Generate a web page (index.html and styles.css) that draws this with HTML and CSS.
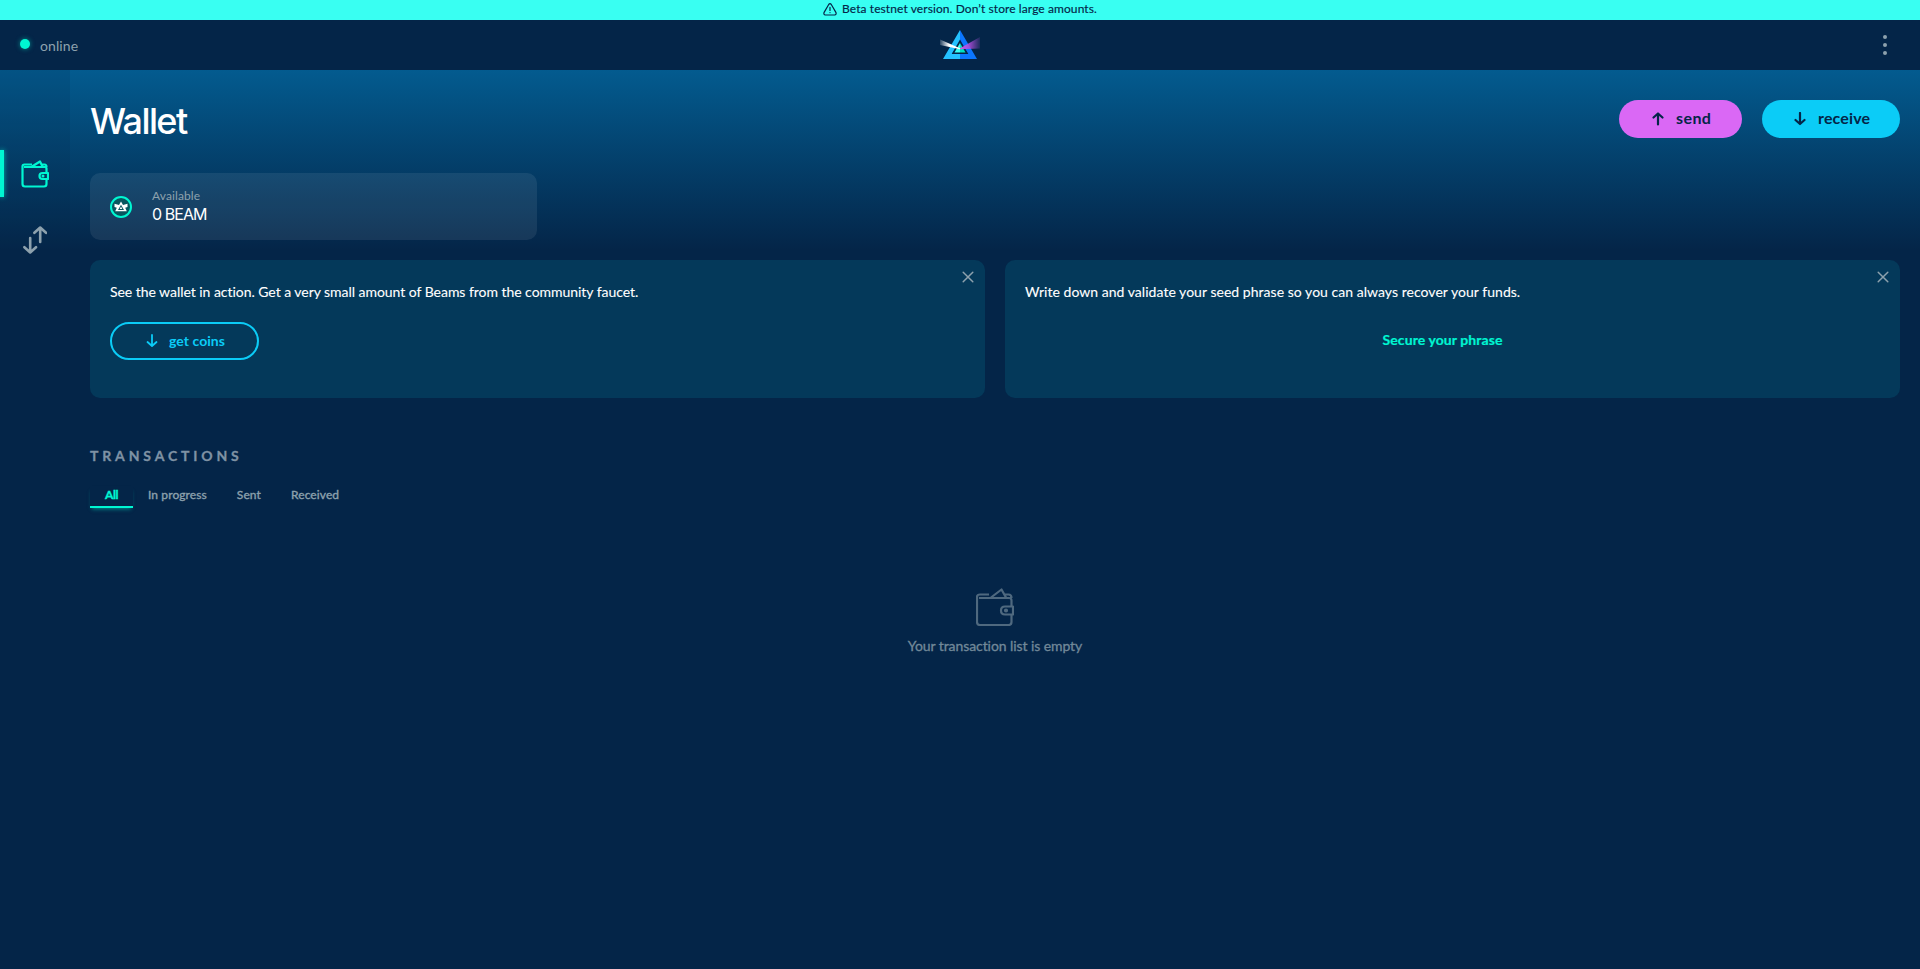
FILE: index.html
```
<!DOCTYPE html>
<html lang="en">
<head>
<meta charset="utf-8">
<title>Wallet</title>
<link rel="stylesheet" href="styles.css">
</head>
<body>
<div class="banner">
  <svg class="banner-icon" width="14" height="13" viewBox="0 0 14 13" fill="none" stroke="#042548" stroke-width="1.2" stroke-linecap="round"><path d="M5.7 1.5Q7-.1 8.3 1.5L13 9.6Q13.600 11.700 11.600 12H2.400Q.4 11.700 1 9.600Z"/><path d="M7 4.300V7.400M7 9.500V9.600"/></svg>
  <span class="banner-text">Beta testnet version. Don’t store large amounts.</span>
</div>
<header class="header">
  <div class="status"><i class="dot"></i><span class="status-text">online</span></div>
  <svg class="logo" width="40" height="30" viewBox="0 0 40 30">
    <defs>
      <linearGradient id="ray-left" x1="0" x2="1"><stop offset="0" stop-color="#fff" stop-opacity=".15"/><stop offset=".45" stop-color="#fff"/><stop offset="1" stop-color="#fff"/></linearGradient>
      <linearGradient id="ray-right" x1="0" x2="1"><stop offset="0" stop-color="#d35bea"/><stop offset=".5" stop-color="#a94bd8" stop-opacity=".85"/><stop offset="1" stop-color="#9b4fd0" stop-opacity=".15"/></linearGradient>
    </defs>
    <path fill="#24c1ff" d="M20 0V11L12 24H20V29H3Z"/>
    <path fill="#0b76ff" d="M20 0V11L28 24H20V29H37Z"/>
    <path fill="#042548" d="M20 9.500 28.300 24H11.700Z"/>
    <path fill="#39fff2" d="M20 13V22.500H14.500Z"/>
    <path fill="#00e2c2" d="M20 13V22.500H25.500Z"/>
    <path fill="url(#ray-left)" d="M0 9.500 20 18.300V19.300L0 15Z"/>
    <path fill="url(#ray-right)" d="M20 18.300 40 7V18.500L20 19.300Z"/>
  </svg>
  <svg class="menu" width="4" height="20" viewBox="0 0 4 20" fill="#8da1ad"><circle cx="2" cy="2" r="2"/><circle cx="2" cy="10" r="2"/><circle cx="2" cy="18" r="2"/></svg>
</header>
<div class="body">
  <nav class="sidebar">
    <a class="nav-item nav-active">
      <svg width="28" height="28" viewBox="0 0 28 28" fill="none" stroke="#00f6d2" stroke-width="2.200" stroke-linejoin="round"><path d="M11 4.500H3.500Q1.500 4.500 1.500 6.500V24Q1.500 26.500 4 26.500H23Q25.500 26.500 25.500 24V20M25.500 12V8.500Q25.500 7 24 7H3M11 6.500 19 1.500 21.500 6.500M21 4.500H23.500Q25.500 4.500 25.500 7"/><path d="M27 13H21.500Q18.500 13 18.500 16T21.500 19H27Z"/><circle cx="22" cy="16" r=".7" stroke-width="1.600"/></svg>
    </a>
    <a class="nav-item">
      <svg width="24" height="28" viewBox="0 0 24 28" fill="none" stroke="#8da1ad" stroke-width="2.600" stroke-linecap="round" stroke-linejoin="round"><path d="M7.200 12V26M1.400 21.200 7.200 26.500 13 21.200M17.200 16V2M11.400 6.800 17.200 1.500 23 6.800"/></svg>
    </a>
  </nav>
  <main class="content">
    <div class="title-row">
      <h1 class="title">Wallet</h1>
      <div class="actions">
        <button class="btn btn-send"><svg width="12" height="14" viewBox="0 0 12 14"><path d="M6 12.500V2M1.500 5.500 6 1.500 10.500 5.500"/></svg><span>send</span></button>
        <button class="btn btn-receive"><svg width="12" height="14" viewBox="0 0 12 14"><path d="M6 1V11.500M1.500 8 6 12 10.500 8"/></svg><span>receive</span></button>
      </div>
    </div>
    <section class="balance">
      <svg class="coin" width="22" height="22" viewBox="0 0 22 22"><circle cx="11" cy="11" r="10" fill="#08565f" stroke="#00f6d2" stroke-width="2"/><path fill="#fff" fill-rule="evenodd" d="M11 5.500 13 9 17.500 7.800V11L15.200 11.800 16.800 15.300H5.200L6.800 11.800 4.500 11V7.800L9 9ZM11 8.800 8 14H14ZM11 10.500 12.300 13H9.700Z"/></svg>
      <div class="balance-info"><span class="label">Available</span><span class="amount">0 BEAM</span></div>
    </section>
    <div class="cards">
      <section class="card">
        <p class="card-text card-text-faucet">See the wallet in action. Get a very small amount of Beams from the community faucet.</p>
        <button class="btn btn-outline"><svg width="12" height="14" viewBox="0 0 12 14"><path d="M6 1V11.500M1.500 8 6 12 10.500 8"/></svg><span>get coins</span></button>
        <svg class="close" width="12" height="12" viewBox="0 0 12 12"><path d="M1.200 1.200 10.800 10.800M10.800 1.200 1.200 10.800"/></svg>
      </section>
      <section class="card">
        <p class="card-text card-text-seed">Write down and validate your seed phrase so you can always recover your funds.</p>
        <a class="secure">Secure your phrase</a>
        <svg class="close" width="12" height="12" viewBox="0 0 12 12"><path d="M1.200 1.200 10.800 10.800M10.800 1.200 1.200 10.800"/></svg>
      </section>
    </div>
    <h2 class="section-title">TRANSACTIONS</h2>
    <div class="tabs">
      <span class="tab tab-active">All</span><span class="tab">In progress</span><span class="tab">Sent</span><span class="tab">Received</span>
    </div>
    <div class="empty">
      <svg width="38" height="38" viewBox="0 0 38 38" fill="none" stroke="#8da1ad" stroke-width="2.200" stroke-linejoin="round"><path d="M13 6.500H4Q1 6.500 1 9V34Q1 37 4 37H32.500Q35.500 37 35.500 34V27M35.500 18V12.500Q35.500 10 33 10H3M15 9.500 25.500 1.500 30 9.500M29 6.500H32.500Q35.500 6.500 35.500 10"/><path d="M37 18.500H29Q25 18.500 25 22.500T29 26.500H37Z"/><circle cx="30" cy="22.500" r="1"/></svg>
      <span>Your transaction list is empty</span>
    </div>
  </main>
</div>
</body>
</html>
```
FILE: styles.css
```
* { box-sizing: border-box; }
body {
  margin: 0;
  height: 969px;
  background: #042548;
  font-family: Lato, sans-serif;
  font-size: 14px;
  font-variant-ligatures: none;
  color: #fff;
  display: flex;
  flex-direction: column;
  overflow: hidden;
}
svg { display: block; flex: none; }
h1, h2, p { margin: 0; }
.banner {
  height: 20px;
  flex: none;
  background: #39fff2;
  color: #042548;
  display: flex;
  justify-content: center;
  gap: 5px;
  font-size: 12px;
  line-height: 18px;
  letter-spacing: .09px;
  -webkit-text-stroke: .15px;
}
.banner-icon { margin-top: 3px; }
.header {
  height: 50px;
  flex: none;
  padding: 0 33px 0 20px;
  display: grid;
  grid-template-columns: 920px 40px 1fr;
  align-items: start;
}
.status { display: flex; gap: 10px; color: #8da1ad; }
.dot {
  width: 10px;
  height: 10px;
  margin-top: 19px;
  border-radius: 50%;
  background: #00f6d2;
  box-shadow: 0 0 5px rgba(0, 246, 210, .5);
}
.status-text { line-height: 20px; margin-top: 16px; letter-spacing: .1px; }
.logo { margin-top: 10px; }
.menu { justify-self: end; margin-top: 15px; }
.body {
  flex: 1;
  display: flex;
  background: linear-gradient(#035b8f 0, #042548 180px);
}
.sidebar {
  width: 70px;
  flex: none;
  padding-top: 80px;
  background: rgba(4, 37, 72, .15);
}
.nav-item {
  display: flex;
  align-items: center;
  justify-content: center;
  height: 46px;
}
.nav-active { position: relative; height: 48px; margin-bottom: 19px; }
.nav-active::before {
  content: "";
  position: absolute;
  left: 0;
  top: 0;
  width: 4px;
  height: 47px;
  background: #00f6d2;
  box-shadow: 0 0 5px rgba(0, 246, 210, .7);
}
.content { flex: 1; padding: 30px 20px 0; }
.title-row { display: flex; justify-content: space-between; height: 73px; }
.title { font: 500 36px/42px Inter, sans-serif; letter-spacing: -1.6px; }
.actions { display: flex; gap: 20px; }
.btn {
  height: 38px;
  border: 0;
  border-radius: 19px;
  display: flex;
  align-items: center;
  font: 700 16px/20px Lato, sans-serif;
  color: #042548;
  padding: 0 0 0 33px;
  gap: 12px;
}
.btn span { padding-bottom: 2px; }
.btn path, .close path { fill: none; stroke: currentColor; stroke-width: 2.2; stroke-linecap: round; stroke-linejoin: round; }
.btn-send { width: 123px; background: #da68f5; letter-spacing: .4px; }
.btn-receive { width: 138px; padding-left: 32px; background: #0bccf7; letter-spacing: .15px; }
.btn-outline {
  width: 149px;
  margin-top: 20px;
  padding-left: 34px;
  gap: 11px;
  border: 2px solid #0bccf7;
  background: none;
  color: #0bccf7;
  font-size: 14px;
  letter-spacing: .05px;
}
.btn-outline path { stroke-width: 1.8; }
.btn-outline span { padding-bottom: 0; }
.balance {
  width: 447px;
  height: 67px;
  padding: 0 20px;
  border-radius: 10px;
  background: rgba(255, 255, 255, .08);
  display: flex;
  gap: 20px;
}
.coin { margin-top: 23px; }
.balance-info { display: flex; flex-direction: column; padding-top: 15px; }
.label { font-size: 12px; line-height: 15px; color: #8da1ad; letter-spacing: .1px; }
.amount { font: 400 16px/21px Inter, sans-serif; margin-top: 1px; letter-spacing: -.95px; }
.cards { display: grid; grid-template-columns: 1fr 1fr; gap: 20px; margin-top: 20px; }
.card {
  position: relative;
  height: 138px;
  padding: 22px 20px;
  border-radius: 10px;
  background: #04395a;
}
.card-text { font-size: 14px; line-height: 20px; white-space: nowrap; -webkit-text-stroke: .1px; }
.card-text-faucet { letter-spacing: -.04px; }
.card-text-seed { letter-spacing: .035px; }
.close { position: absolute; right: 11px; top: 11px; color: #8da1ad; }
.close path { stroke-width: 1.5; }
.secure { display: block; margin-top: 28px; padding-right: 20px; text-align: center; font-weight: 700; line-height: 20px; letter-spacing: .08px; color: #00f6d2; -webkit-text-stroke: .2px; }
.section-title { margin-top: 48px; font-size: 14px; line-height: 20px; letter-spacing: 3.85px; color: #7f92a4; -webkit-text-stroke: .3px; }
.tabs { display: flex; margin-top: 20px; font-size: 12px; letter-spacing: .1px; color: #8da1ad; -webkit-text-stroke: .35px; }
.tab { height: 22px; padding: 1px 15px 0; line-height: 16px; }
.tab-active { width: 43px; font-weight: 700; letter-spacing: -.4px; color: #00f6d2; border-bottom: 2px solid #00f6d2; box-shadow: 0 3px 4px -2px rgba(0, 246, 210, .5); }
.empty { display: flex; flex-direction: column; align-items: center; margin-top: 80px; gap: 10px; line-height: 20px; letter-spacing: -.08px; color: #8da1ad; }
.empty svg { opacity: .55; }
.empty span { opacity: .8; -webkit-text-stroke: .3px; }
```
